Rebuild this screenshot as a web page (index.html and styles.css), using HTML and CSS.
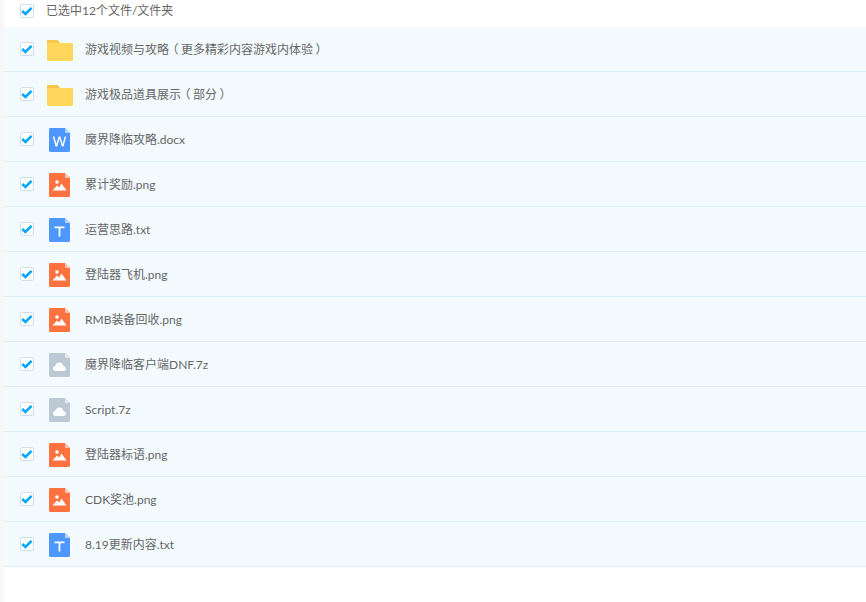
FILE: index.html
```html
<!DOCTYPE html>
<html lang="zh-CN">
<head>
<meta charset="utf-8">
<title>文件列表</title>
<link rel="stylesheet" href="styles.css">
</head>
<body>
<svg class="defs" width="0" height="0" aria-hidden="true">
  <defs>
    <symbol id="check" viewBox="0 0 12 12"><path d="M1.2 6 L4.4 9 L10.6 2.8" fill="none" stroke="#06a7ff" stroke-width="2.6"/></symbol>
    <symbol id="folder" viewBox="0 0 26 21"><path d="M1.5 0H9.5C10.6 0 11 .5 12 1.5L13 3H24.5C25.4 3 26 3.6 26 4.5V19.5C26 20.4 25.4 21 24.5 21H1.5C.6 21 0 20.4 0 19.5V1.5C0 .6 .6 0 1.5 0Z" fill="#ffd659"/><path d="M0 3V1.5C0 .6 .6 0 1.5 0H9.5C10.6 0 11 .5 12 1.5L13 3Z" fill="#f5c64c"/></symbol>
    <symbol id="sheet-blue" viewBox="0 0 21 24"><path d="M1.5 0H16L21 5V22.5C21 23.4 20.4 24 19.5 24H1.5C.6 24 0 23.4 0 22.5V1.5C0 .6 .6 0 1.5 0Z" fill="#4d97ff"/><path d="M16 0L21 5H17C16.4 5 16 4.6 16 4Z" fill="#b8d5ff"/></symbol>
    <symbol id="sheet-orange" viewBox="0 0 21 24"><path d="M1.5 0H16L21 5V22.5C21 23.4 20.4 24 19.5 24H1.5C.6 24 0 23.4 0 22.5V1.5C0 .6 .6 0 1.5 0Z" fill="#ff7240"/><path d="M16 0L21 5H17C16.4 5 16 4.6 16 4Z" fill="#ffc7b2"/><circle cx="8" cy="9" r="1.8" fill="#fff"/><path d="M3.5 17.5L8 12.5L10.2 14.5L12.5 10.5L17.5 17.5Z" fill="#fff"/></symbol>
    <symbol id="sheet-grey" viewBox="0 0 21 24"><path d="M1.5 0H16L21 5V22.5C21 23.4 20.4 24 19.5 24H1.5C.6 24 0 23.4 0 22.5V1.5C0 .6 .6 0 1.5 0Z" fill="#bcc8d4"/><path d="M16 0L21 5H17C16.4 5 16 4.6 16 4Z" fill="#e1e7ed"/><path d="M6.5 18C4.8 18 4 16.8 4 15.5C4 14.2 5 13.2 6.2 13.1C6.6 11.1 8.3 9.5 10.3 9.5C12.5 9.5 14.2 11.2 14.5 13.2C15.9 13.3 17 14.4 17 15.8C17 17.1 16 18 14.6 18Z" fill="#fff"/></symbol>
    <symbol id="mark-w" viewBox="0 0 21 24"><use href="#sheet-blue"/><path d="M3.8 8.5L6.5 18.5H8.1L10.5 10.8L12.9 18.5H14.5L17.2 8.5H15.7L13.7 16L11.3 8.5H9.7L7.3 16L5.3 8.5Z" fill="#fff"/></symbol>
    <symbol id="mark-t" viewBox="0 0 21 24"><use href="#sheet-blue"/><path d="M5.5 8.5H15.5V10.2H11.4V18.5H9.6V10.2H5.5Z" fill="#fff"/></symbol>
  </defs>
</svg>
<main class="panel">
  <div class="select-bar">
    <span class="checkbox"><svg class="tick"><use href="#check"/></svg></span>
    <span class="select-label">已选中12个文件/文件夹</span>
  </div>
  <ul class="file-list">
    <li class="file-row"><span class="checkbox"><svg class="tick"><use href="#check"/></svg></span><span class="icon-cell"><svg class="icon-folder"><use href="#folder"/></svg></span><span class="file-name">游戏视频与攻略<span class="paren">（</span>更多精彩内容游戏内体验<span class="paren">）</span></span></li>
    <li class="file-row"><span class="checkbox"><svg class="tick"><use href="#check"/></svg></span><span class="icon-cell"><svg class="icon-folder"><use href="#folder"/></svg></span><span class="file-name">游戏极品道具展示<span class="paren">（</span>部分<span class="paren">）</span></span></li>
    <li class="file-row"><span class="checkbox"><svg class="tick"><use href="#check"/></svg></span><span class="icon-cell"><svg class="icon-file"><use href="#mark-w"/></svg></span><span class="file-name">魔界降临攻略.docx</span></li>
    <li class="file-row"><span class="checkbox"><svg class="tick"><use href="#check"/></svg></span><span class="icon-cell"><svg class="icon-file"><use href="#sheet-orange"/></svg></span><span class="file-name">累计奖励.png</span></li>
    <li class="file-row"><span class="checkbox"><svg class="tick"><use href="#check"/></svg></span><span class="icon-cell"><svg class="icon-file"><use href="#mark-t"/></svg></span><span class="file-name">运营思路.txt</span></li>
    <li class="file-row"><span class="checkbox"><svg class="tick"><use href="#check"/></svg></span><span class="icon-cell"><svg class="icon-file"><use href="#sheet-orange"/></svg></span><span class="file-name">登陆器飞机.png</span></li>
    <li class="file-row"><span class="checkbox"><svg class="tick"><use href="#check"/></svg></span><span class="icon-cell"><svg class="icon-file"><use href="#sheet-orange"/></svg></span><span class="file-name">RMB装备回收.png</span></li>
    <li class="file-row"><span class="checkbox"><svg class="tick"><use href="#check"/></svg></span><span class="icon-cell"><svg class="icon-file"><use href="#sheet-grey"/></svg></span><span class="file-name">魔界降临客户端DNF.7z</span></li>
    <li class="file-row"><span class="checkbox"><svg class="tick"><use href="#check"/></svg></span><span class="icon-cell"><svg class="icon-file"><use href="#sheet-grey"/></svg></span><span class="file-name">Script.7z</span></li>
    <li class="file-row"><span class="checkbox"><svg class="tick"><use href="#check"/></svg></span><span class="icon-cell"><svg class="icon-file"><use href="#sheet-orange"/></svg></span><span class="file-name">登陆器标语.png</span></li>
    <li class="file-row"><span class="checkbox"><svg class="tick"><use href="#check"/></svg></span><span class="icon-cell"><svg class="icon-file"><use href="#sheet-orange"/></svg></span><span class="file-name">CDK奖池.png</span></li>
    <li class="file-row"><span class="checkbox"><svg class="tick"><use href="#check"/></svg></span><span class="icon-cell"><svg class="icon-file"><use href="#mark-t"/></svg></span><span class="file-name">8.19更新内容.txt</span></li>
  </ul>
</main>
</body>
</html>
```
FILE: styles.css
```css
* { box-sizing: border-box; }
html, body { height: 100%; }
body {
  margin: 0;
  background: #f7f7f7;
  font-family: Lato, "Noto Sans CJK SC", sans-serif;
  font-size: 12px;
  overflow: hidden;
}
.defs { display: block; height: 0; }
.panel {
  margin-left: 4px;
  min-height: 602px;
  background: #fff;
}
.select-bar {
  height: 27px;
  display: flex;
  align-items: center;
  padding: 0 0 6px 16px;
}
.select-label {
  margin-left: 12px;
  color: #666;
  line-height: 20px;
}
.checkbox {
  flex: none;
  width: 14px;
  height: 14px;
  border: 1px solid #cfdfee;
  border-radius: 2px;
  background: #fff;
  display: flex;
}
.tick { width: 12px; height: 12px; }
.file-list { list-style: none; margin: 0; padding: 0; }
.file-row {
  height: 45px;
  display: flex;
  align-items: center;
  padding-left: 16px;
  background: #f3fbff;
  border-bottom: 1px solid #dfeefb;
}
.icon-cell {
  flex: none;
  width: 26px;
  margin: 2px 0 0 13px;
  display: flex;
  justify-content: flex-start;
}
.icon-folder { width: 26px; height: 21px; }
.icon-file { width: 21px; height: 24px; margin-left: 2px; }
.file-name {
  margin: 2px 0 0 12px;
  color: #666;
  line-height: 20px;
  white-space: nowrap;
}
.paren {
  display: inline-block;
  width: 12px;
  line-height: 12px;
  text-align: center;
  font-feature-settings: "palt";
}
```
